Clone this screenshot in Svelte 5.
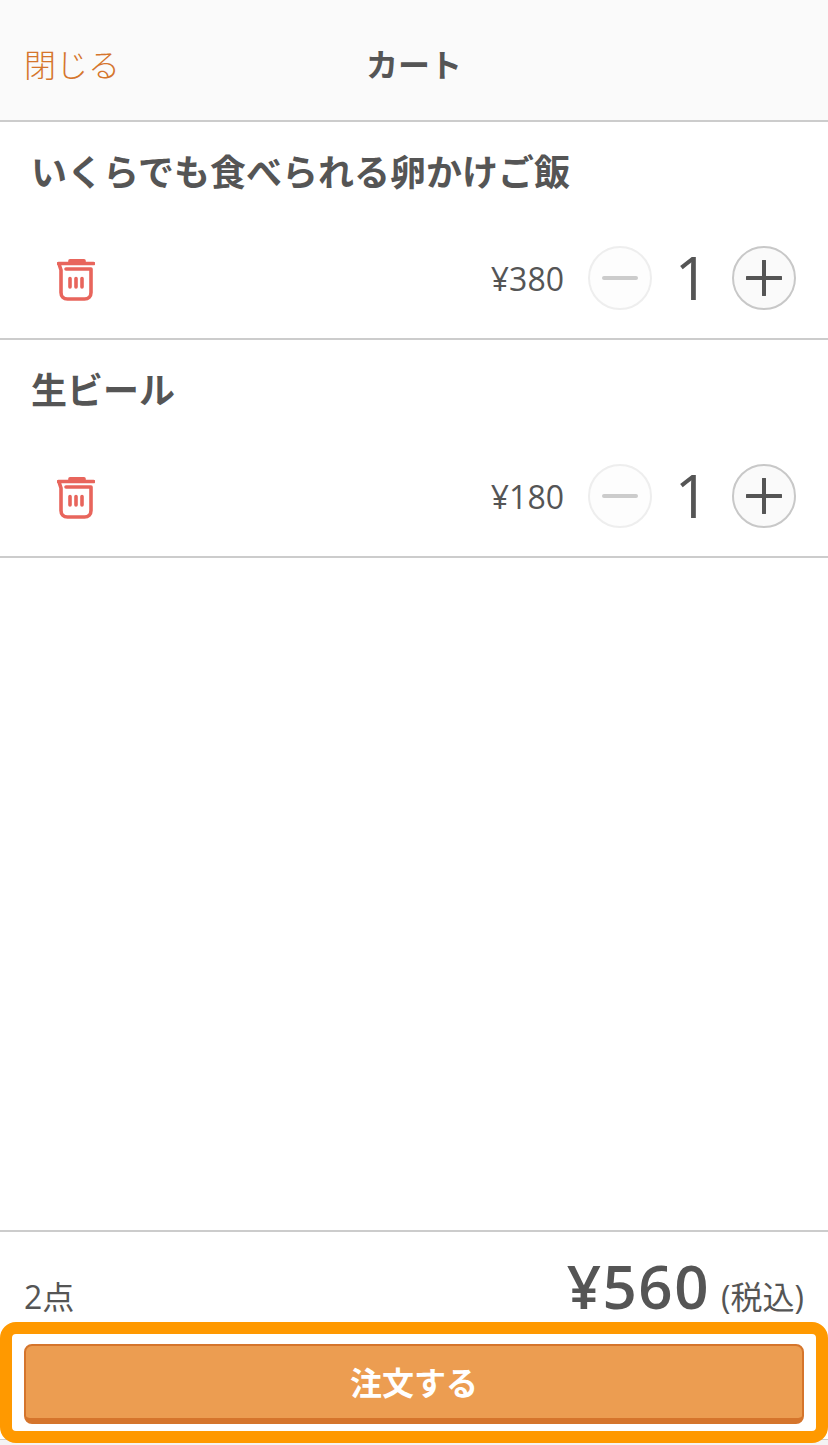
<script>
  const items = [
    { name: 'いくらでも食べられる卵かけご飯', price: 380, qty: 1 },
    { name: '生ビール', price: 180, qty: 1 }
  ];
</script>

<div class="page">
  <header class="header">
    <span class="header__close">閉じる</span>
    <h1 class="header__title">カート</h1>
  </header>

  <main class="list">
    {#each items as item}
      <section class="item">
        <h2 class="item__name">{item.name}</h2>
        <div class="item__row">
          <svg class="trash" viewBox="0 0 38 44" width="38" height="44" fill="none" stroke="#e8655c" stroke-width="3.6" stroke-linecap="round" stroke-linejoin="round">
            <path d="M1.5 4.5H36.5M13 4V1.8H27V4M2 5L4 11V33.5C4 37.5 6.5 40 10.5 40H27.5C31.5 40 34 37.5 34 33.5V10H9" />
            <path d="M13 19.5V28M19 19.5V28M25 19.5V28" />
          </svg>
          <span class="item__price">¥{item.price}</span>
          <button class="qty qty_off" aria-label="減らす">
            <svg viewBox="0 0 36 36" width="36" height="36"><path d="M2 18H34" stroke="#cccccc" stroke-width="4" stroke-linecap="round" /></svg>
          </button>
          <span class="item__qty">{item.qty}</span>
          <button class="qty" aria-label="増やす">
            <svg viewBox="0 0 36 36" width="36" height="36"><path d="M1 18H35M18 1V35" stroke="#555555" stroke-width="4" stroke-linecap="round" /></svg>
          </button>
        </div>
      </section>
    {/each}
  </main>

  <footer class="footer">
    <div class="total">
      <span class="total__count">2点</span>
      <span class="total__sum"><b>¥560</b> <small>(税込)</small></span>
    </div>
    <div class="action">
      <button class="order">注文する</button>
    </div>
  </footer>
</div>

<style>
  :global(body) {
    margin: 0;
    background: #fff;
  }

  .page {
    display: flex;
    flex-direction: column;
    width: 828px;
    height: 1445px;
    overflow: hidden;
    color: #555;
    font-family: "Open Sans", "Noto Sans CJK JP", sans-serif;
  }

  .header {
    position: relative;
    display: flex;
    align-items: center;
    justify-content: center;
    flex: 0 0 122px;
    box-sizing: border-box;
    padding-top: 10px;
    background: #fafafa;
    border-bottom: 2px solid #ccc;
  }

  .header__close {
    position: absolute;
    left: 24px;
    top: 43px;
    color: #d5752c;
    font-size: 32px;
    line-height: 44px;
    font-weight: 300;
  }

  .header__title {
    margin: 0;
    font-size: 32px;
    line-height: 44px;
    font-weight: 700;
  }

  .list {
    flex: 1 1 auto;
  }

  .item {
    box-sizing: border-box;
    height: 218px;
    padding: 29px 32px 0 31px;
    border-bottom: 2px solid #ccc;
  }

  .item__name {
    margin: 0;
    font-size: 36px;
    line-height: 44px;
    font-weight: 700;
  }

  .item__row {
    display: flex;
    align-items: center;
    height: 64px;
    margin-top: 51px;
    margin-left: 2px;
  }

  .trash {
    margin: 6px 0 0 24px;
  }

  .item__price {
    margin-left: auto;
    padding-top: 2px;
    font-size: 32px;
    line-height: 64px;
    font-weight: 400;
  }

  .item__qty {
    width: 80px;
    padding-bottom: 2px;
    text-align: center;
    font-size: 60px;
    line-height: 64px;
    font-weight: 400;
  }

  .qty {
    display: flex;
    align-items: center;
    justify-content: center;
    box-sizing: border-box;
    width: 64px;
    height: 64px;
    padding: 0;
    background: #fafafa;
    border: 2px solid #c8c8c8;
    border-radius: 50%;
  }

  .qty_off {
    margin-left: 24px;
    background: #fdfdfd;
    border-color: #eee;
  }

  .footer {
    position: relative;
    flex: 0 0 auto;
    box-sizing: border-box;
    height: 215px;
    padding-bottom: 5px;
    background: linear-gradient(#fff 207px, #ccc 207px, #ccc 208px, #f4f4f4 208px);
    border-top: 2px solid #ccc;
  }

  .total {
    display: flex;
    align-items: baseline;
    justify-content: space-between;
    height: 90px;
    padding: 0 24px;
    box-sizing: border-box;
    line-height: 109px;
  }

  .total__count {
    font-size: 32px;
  }

  .total__sum b {
    font-size: 60px;
    font-weight: 600;
    letter-spacing: 1.5px;
  }

  .total__sum small {
    margin-left: 7px;
    font-size: 32px;
  }

  .action {
    box-sizing: border-box;
    height: 121px;
    padding: 10px 12px 7px;
    background: #fff;
    border: 12px solid #f90;
    border-radius: 16px;
  }

  .order {
    display: block;
    box-sizing: border-box;
    width: 100%;
    height: 80px;
    padding: 0 0 2px;
    color: #fff;
    font: inherit;
    font-size: 32px;
    font-weight: 700;
    background: #ec9d51;
    border: 2px solid #d5752c;
    border-bottom-width: 6px;
    border-radius: 8px;
  }
</style>
